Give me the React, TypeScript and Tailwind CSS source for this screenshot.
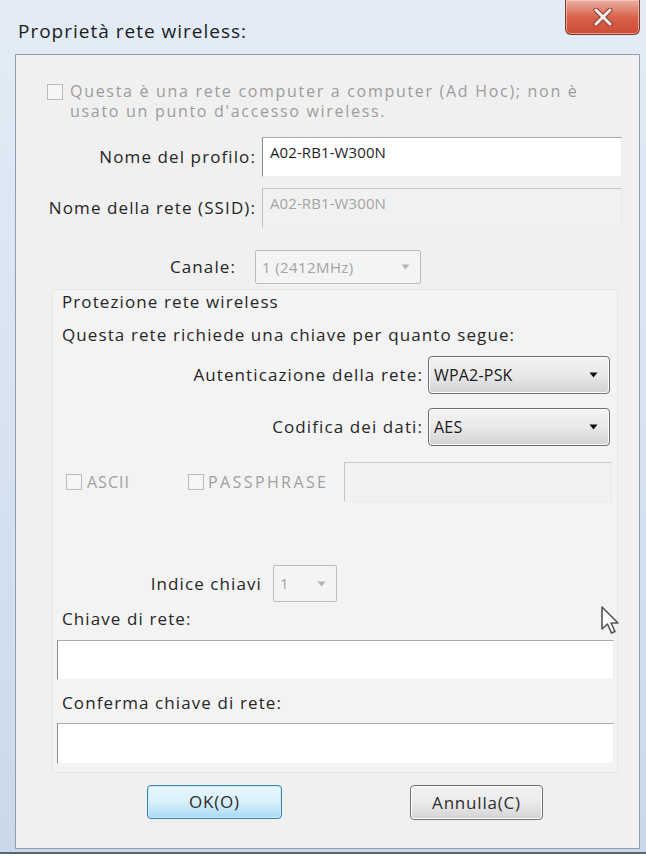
import React from 'react'

const labelText = "text-[17px] leading-[20px] tracking-[1.1px] text-[#262626] whitespace-nowrap"
const grayText = "text-[16px] leading-[20px] tracking-[1.7px] text-[#9c9c9c] whitespace-nowrap"

function CheckBox() {
  return <div className="w-[16px] h-[16px] shrink-0 border border-[#b8bcc0] bg-[#f6f6f6]" />
}

function TextBox({ width, height, value, disabled }: { width: string; height: string; value?: string; disabled?: boolean }) {
  return (
    <div
      className={`${width} ${height} shrink-0 border-t border-l ${
        disabled
          ? 'bg-[#f1f1f1] border-t-[#c9c9c9] border-l-[#c4c4c4] border-r border-b border-r-[#e6e6e6] border-b-[#ececec]'
          : 'bg-white border-t-[#a9a9a9] border-l-[#8c8c8c] border-r border-b border-r-[#eeeeee] border-b-[#f2f2f2]'
      } px-[7px] pt-[2px]`}
    >
      {value && (
        <span className={`text-[15px] leading-[20px] tracking-[0.1px] ${disabled ? 'text-[#a4a4a4]' : 'text-[#1e1e1e]'}`}>
          {value}
        </span>
      )}
    </div>
  )
}

function Arrow({ color }: { color: string }) {
  return (
    <svg width="9" height="6" viewBox="0 0 9 6">
      <path d="M0.5 0.5 L8.5 0.5 L4.5 5.5 Z" fill={color} />
    </svg>
  )
}

function Combo({ width, height, value, disabled }: { width: string; height: string; value: string; disabled?: boolean }) {
  if (disabled) {
    return (
      <div className={`${width} ${height} shrink-0 flex items-center justify-between border border-[#b9bdc1] rounded-[2px] bg-[#f4f4f4] pl-[6px] pr-[10px]`}>
        <span className="text-[15px] text-[#a3a3a3] tracking-[0.4px]">{value}</span>
        <Arrow color="#b4b4b4" />
      </div>
    )
  }
  return (
    <div className={`${width} ${height} shrink-0 flex items-center justify-between border border-[#6f6f6f] rounded-[4px] bg-gradient-to-b from-[#f3f3f3] via-[#e9e9e9] to-[#d2d2d2] pl-[5px] pr-[11px] shadow-[inset_0_0_0_1px_#fbfbfb]`}>
      <span className="text-[16px] text-[#1b1b1b] tracking-[0.2px]">{value}</span>
      <Arrow color="#111111" />
    </div>
  )
}

export default function App() {
  return (
    <div className="w-[646px] h-[856px] bg-white overflow-hidden font-['Open_Sans','Noto_Sans',sans-serif] relative">
      <div className="h-[854px] flex flex-col bg-gradient-to-b from-[#e3ecf6] via-[#d7e3f1] to-[#cad9ea] border-b-2 border-[#5b6572] pl-[15px] pr-[6px] pb-[3px]">
        {/* title bar */}
        <div className="h-[54px] shrink-0 flex items-start justify-between">
          <div className="mt-[19px] ml-[3px] text-[19px] leading-[24px] text-[#1c1c1c] tracking-[1px]">Proprietà rete wireless:</div>
          <div className="w-[75px] h-[35px] flex items-center justify-center rounded-b-[6px] border border-t-0 border-[#7a3a30] bg-gradient-to-b from-[#eab0a3] via-[#d8624c] to-[#cc4a35] shadow-[inset_0_0_0_1px_rgba(255,210,200,0.6)]">
            <svg width="20" height="18" viewBox="0 0 20 18">
              <path d="M3 2 L17 16 M17 2 L3 16" stroke="#8a3a30" strokeWidth="5" strokeLinecap="round" />
              <path d="M3 2 L17 16 M17 2 L3 16" stroke="#f4eeec" strokeWidth="3" strokeLinecap="round" />
            </svg>
          </div>
        </div>

        {/* content */}
        <div className="flex-1 flex flex-col bg-[#f0f0f0] border border-[#8f9dad]">
          <div className="mt-[26px] ml-[31px] flex items-start gap-[7px]">
            <div className="mt-[3px]"><CheckBox /></div>
            <div className={grayText}>
              Questa è una rete computer a computer (Ad Hoc); non è
              <br />
              usato un punto d'accesso wireless.
            </div>
          </div>

          <div className="mt-[16px] flex items-center gap-[6px]">
            <div className={`w-[240px] text-right ${labelText}`}>Nome del profilo:</div>
            <TextBox width="w-[360px]" height="h-[40px]" value="A02-RB1-W300N" />
          </div>

          <div className="mt-[11px] flex items-center gap-[6px]">
            <div className={`w-[240px] text-right ${labelText}`}>Nome della rete (SSID):</div>
            <TextBox width="w-[360px]" height="h-[40px]" value="A02-RB1-W300N" disabled />
          </div>

          <div className="mt-[22px] flex items-center gap-[19px]">
            <div className={`w-[220px] text-right ${labelText}`}>Canale:</div>
            <Combo width="w-[166px]" height="h-[34px]" value="1 (2412MHz)" disabled />
          </div>

          {/* protezione group */}
          <div className="mt-[5px] ml-[36px] w-[566px] flex flex-col border border-[#e6e6e6] bg-[#f3f3f3] pb-[8px]">
            <div className={`mt-[2px] pl-[9px] ${labelText}`}>Protezione rete wireless</div>
            <div className={`mt-[13px] pl-[9px] ${labelText}`}>Questa rete richiede una chiave per quanto segue:</div>

            <div className="mt-[11px] flex items-center gap-[5px]">
              <div className={`w-[370px] text-right ${labelText}`}>Autenticazione della rete:</div>
              <Combo width="w-[182px]" height="h-[38px]" value="WPA2-PSK" />
            </div>

            <div className="mt-[14px] flex items-center gap-[5px]">
              <div className={`w-[370px] text-right ${labelText}`}>Codifica dei dati:</div>
              <Combo width="w-[182px]" height="h-[38px]" value="AES" />
            </div>

            <div className="mt-[16px] h-[40px] flex items-center">
              <div className="ml-[13px] w-[122px] flex items-center gap-[5px]">
                <CheckBox />
                <span className="text-[16px] text-[#a0a0a0] tracking-[1px]">ASCII</span>
              </div>
              <div className="w-[156px] flex items-center gap-[4px]">
                <CheckBox />
                <span className="text-[16px] text-[#a0a0a0] tracking-[2.4px]">PASSPHRASE</span>
              </div>
              <TextBox width="w-[268px]" height="h-[40px]" disabled />
            </div>

            <div className="mt-[63px] flex items-center gap-[11px]">
              <div className={`w-[209px] text-right ${labelText}`}>Indice chiavi</div>
              <Combo width="w-[64px]" height="h-[37px]" value="1" disabled />
            </div>

            <div className={`mt-[7px] pl-[9px] ${labelText}`}>Chiave di rete:</div>
            <div className="mt-[11px] ml-[4px]">
              <TextBox width="w-[557px]" height="h-[40px]" />
            </div>

            <div className={`mt-[13px] pl-[9px] ${labelText}`}>Conferma chiave di rete:</div>
            <div className="mt-[10px] ml-[4px]">
              <TextBox width="w-[557px]" height="h-[41px]" />
            </div>
          </div>

          {/* buttons */}
          <div className="mt-[12px] flex items-start">
            <button className="ml-[131px] w-[135px] h-[34px] rounded-[4px] border border-[#3c7fb1] bg-gradient-to-b from-[#eaf6fd] via-[#d9f0fc] to-[#a7d9f5] shadow-[inset_0_0_0_1px_#c4f0ff] text-[17px] tracking-[0.8px] text-[#2c2c2c]">
              OK(O)
            </button>
            <button className="ml-[128px] w-[133px] h-[35px] rounded-[4px] border border-[#707070] bg-gradient-to-b from-[#f2f2f2] via-[#ebebeb] to-[#d3d3d3] shadow-[inset_0_0_0_1px_#fcfcfc] text-[17px] tracking-[0.8px] text-[#2c2c2c]">
              Annulla(C)
            </button>
          </div>
        </div>
      </div>

      {/* mouse pointer */}
      <svg className="absolute left-[600px] top-[605px]" width="24" height="32" viewBox="0 0 24 32">
        <path d="M2 2 L2 24 L7.5 19 L11.5 28 L15 26.5 L11 18 L18 18 Z" fill="#ffffff" stroke="#555555" strokeWidth="1.6" strokeLinejoin="round" />
      </svg>
    </div>
  )
}
